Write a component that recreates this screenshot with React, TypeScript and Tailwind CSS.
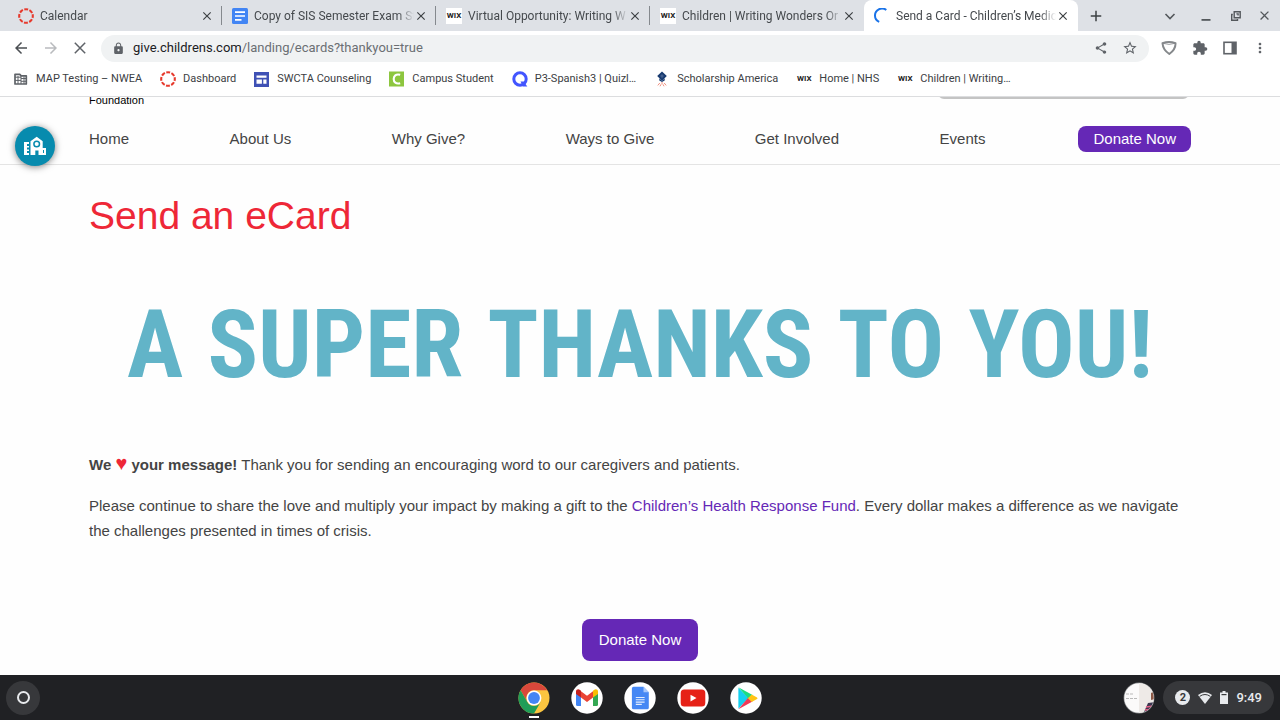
import type { ReactNode } from "react";
import {
  MdAdd,
  MdArrowBack,
  MdArrowForward,
  MdClose,
  MdExtension,
  MdLock,
  MdMoreVert,
  MdShare,
  MdStarBorder,
} from "react-icons/md";

const CanvasIcon = () => (
  <svg viewBox="0 0 16 16" className="size-4 shrink-0" fill="none">
    <circle cx="8" cy="8" r="6.8" stroke="#e6392c" strokeWidth="2.1" strokeDasharray="3.9 1.44" strokeDashoffset="1.95" />
  </svg>
);

const DocsIcon = () => (
  <svg viewBox="0 0 16 16" className="size-4 shrink-0">
    <rect width="16" height="16" rx="1.5" fill="#4285f4" />
    <path d="M3 4.2h10M3 8h10M3 11.8h6.5" stroke="#fff" strokeWidth="1.7" />
  </svg>
);

const WixIcon = () => (
  <span className="flex size-4 shrink-0 items-center justify-center bg-white text-[8px] leading-none font-bold text-[#222]">
    WIX
  </span>
);

const SpinnerIcon = () => (
  <svg viewBox="0 0 16 16" className="size-4 shrink-0" fill="none">
    <path d="M12.3 2A7 7 0 0 0 1 7.8c0 2.2 1.4 4.8 4.2 6" stroke="#1a73e8" strokeWidth="2" />
  </svg>
);

const FolderIcon = () => (
  <svg viewBox="0 0 16 16" className="size-4 shrink-0" fill="none">
    <path d="M2 13V3.3h4.8l1.4 1.5h5.1V13z" stroke="#5f6368" strokeWidth="1.7" strokeLinejoin="round" />
    <path d="M2 6.2h6M2 9.4h6M8 4.5V13M5 5v8M8 7.5h5M8 10.3h5M11 5.5V13" stroke="#5f6368" strokeWidth="1" />
  </svg>
);

const SitesIcon = () => (
  <svg viewBox="0 0 16 16" className="size-4 shrink-0">
    <rect y="1" width="15" height="15" fill="#3f51b5" />
    <path d="M2.5 4.5h10v2.3h-10zM2.5 8.4h5.4v4.4H2.5zM9.3 8.4h3.2v4.4H9.3z" fill="#fff" />
  </svg>
);

const CampusIcon = () => (
  <svg viewBox="0 0 16 16" className="size-4 shrink-0" fill="none">
    <rect width="15" height="15" y="0.5" fill="#8dc63f" />
    <path d="M11.2 3.8C6.8 2.6 4.7 5 4.7 8s2.2 5.4 6.5 4.2" stroke="#fff" strokeWidth="2.1" />
  </svg>
);

const QuizletIcon = () => (
  <svg viewBox="0 0 16 16" className="size-4 shrink-0" fill="none">
    <circle cx="8" cy="8" r="6.2" stroke="#4255ff" strokeWidth="3" />
    <path d="M8.5 10.4h3.2l3.6 5.2h-4.2z" fill="#4255ff" />
  </svg>
);

const ScholarshipIcon = () => (
  <svg viewBox="0 0 16 16" className="size-4 shrink-0">
    <path d="M8 .5 12.8 5 8 9.8 3.2 5z" fill="#173a70" />
    <path d="M5.3 7.2v2.3L8 11l2.7-1.5V7.2L8 9.7z" fill="#173a70" />
    <path d="M8 11v2.2M5.8 12l-2 2.4M10.2 12l2 2.4M7 13.3l-1 2M9 13.3l1 2" stroke="#f0907f" strokeWidth="1" />
    <path d="M8 3.2v4M6.2 5h3.6" stroke="#7f93b5" strokeWidth=".5" />
  </svg>
);

const tabs: { title: string; icon: ReactNode; active?: boolean }[] = [
  { title: "Calendar", icon: <CanvasIcon /> },
  { title: "Copy of SIS Semester Exam St", icon: <DocsIcon /> },
  { title: "Virtual Opportunity: Writing W", icon: <WixIcon /> },
  { title: "Children | Writing Wonders Or", icon: <WixIcon /> },
  { title: "Send a Card - Children’s Medic", icon: <SpinnerIcon />, active: true },
];

const bookmarks = [
  { title: "MAP Testing – NWEA", icon: <FolderIcon /> },
  { title: "Dashboard", icon: <CanvasIcon /> },
  { title: "SWCTA Counseling", icon: <SitesIcon /> },
  { title: "Campus Student", icon: <CampusIcon /> },
  { title: "P3-Spanish3 | Quizl…", icon: <QuizletIcon /> },
  { title: "Scholarship America", icon: <ScholarshipIcon /> },
  { title: "Home | NHS", icon: <WixIcon /> },
  { title: "Children | Writing…", icon: <WixIcon /> },
];

const navLinks = ["Home", "About Us", "Why Give?", "Ways to Give", "Get Involved", "Events"];

const TabStrip = () => (
  <div className="flex h-[31px] items-stretch bg-[#dee1e6] pl-2 text-xs text-[#45494d]">
    {tabs.map((tab, i) => (
      <div
        key={tab.title}
        className={`relative flex w-[214px] min-w-0 items-center pr-2 pl-[10px] ${tab.active ? "rounded-t-lg bg-white" : ""}`}
      >
        {tab.icon}
        <span className="ml-[6px] min-w-0 flex-1 overflow-hidden mask-r-from-90% whitespace-nowrap">{tab.title}</span>
        <button aria-label={`Close ${tab.title}`} className="shrink-0 text-[#3c4043]">
          <MdClose size={14} />
        </button>
        {i < 3 && <span className="absolute top-[6px] right-0 h-[19px] w-px bg-[#85898e]" />}
      </div>
    ))}
    <button aria-label="New tab" className="ml-1 flex w-7 items-center justify-center text-[#3c4043]">
      <MdAdd size={18} />
    </button>
    <div className="ml-auto flex items-center text-[#54585c]">
      <button aria-label="Search tabs" className="flex w-9 justify-center">
        <svg viewBox="0 0 12 12" className="size-3" fill="none">
          <path d="m1.5 4 4.5 4.5L10.5 4" stroke="currentColor" strokeWidth="1.6" />
        </svg>
      </button>
      <button aria-label="Minimize" className="flex w-9 justify-center">
        <svg viewBox="0 0 12 12" className="size-3">
          <path d="M1.5 9h9v1.8h-9z" fill="currentColor" />
        </svg>
      </button>
      <button aria-label="Restore" className="flex w-6 justify-center">
        <svg viewBox="0 0 12 12" className="size-3" fill="none" stroke="currentColor" strokeWidth="1.4">
          <path d="M4.2 1.7h6v6h-6zM2.8 4.5H1.7v5.8h5.8V9M6.4 3.9h1.7v1.6" />
        </svg>
      </button>
      <button aria-label="Close window" className="flex w-8 justify-center">
        <MdClose size={15} />
      </button>
    </div>
  </div>
);

const Toolbar = () => (
  <div className="flex h-[34px] items-center bg-white px-3 text-[#5f6368]">
    <button aria-label="Back" className="mr-3 text-[#4b4f53]">
      <MdArrowBack size={18} />
    </button>
    <button aria-label="Forward" className="mr-3 text-[#b9bbbe]">
      <MdArrowForward size={18} />
    </button>
    <button aria-label="Stop loading" className="mr-[13px]">
      <svg viewBox="0 0 16 16" className="size-4" fill="none">
        <path d="m2.8 2.8 10.4 10.4m0-10.4L2.8 13.2" stroke="currentColor" strokeWidth="1.5" />
      </svg>
    </button>
    <div className="flex h-[27px] flex-1 items-center rounded-full bg-[#f0f2f3] px-[11px]">
      <MdLock size={13} />
      <span className="ml-2 flex-1 text-[13px] text-[#6b6f73]">
        <span className="text-[#202124]">give.childrens.com</span>/landing/ecards?thankyou=true
      </span>
      <button aria-label="Share">
        <MdShare size={14} />
      </button>
      <button aria-label="Bookmark this page" className="ml-[14px]">
        <MdStarBorder size={16} />
      </button>
    </div>
    <div className="ml-3 flex items-center gap-[15px]">
      <button aria-label="Shield extension">
        <svg viewBox="0 0 16 16" className="size-4" fill="none">
          <path d="M1.5 3.3Q8 .7 14.5 3.3 14.8 9.5 8.3 14 2 10 1.5 3.3z" stroke="#85888b" strokeWidth="2" strokeLinejoin="round" />
          <path d="M3 3.5Q8 5.3 13 3.5" stroke="#85888b" strokeWidth=".8" />
        </svg>
      </button>
      <button aria-label="Extensions">
        <MdExtension size={16} />
      </button>
      <button aria-label="Side panel">
        <svg viewBox="0 0 14 14" className="size-[14px]">
          <rect x="1" y="1.3" width="12" height="11.4" fill="none" stroke="currentColor" strokeWidth="1.6" />
          <path d="M8.5 1.5H13v11H8.5z" fill="currentColor" />
        </svg>
      </button>
      <button aria-label="Menu">
        <MdMoreVert size={16} />
      </button>
    </div>
  </div>
);

const BookmarksBar = () => (
  <div className="flex h-8 items-center gap-[18px] border-b border-[#dcdddf] bg-white px-[13px] pb-[3px] text-[11px] leading-4 text-[#3c4043]">
    {bookmarks.map((bookmark) => (
      <a key={bookmark.title} href="#" className="flex items-center gap-[7px] whitespace-nowrap">
        {bookmark.icon}
        {bookmark.title}
      </a>
    ))}
  </div>
);

const SiteHeader = () => (
  <header className="border-b border-[#e4e4e4] px-[89px]">
    <div className="flex h-[10px] items-end justify-between overflow-hidden">
      <span className="text-[11px] leading-[14px] text-black">Foundation</span>
      <input
        aria-label="Search"
        className="mr-[2px] mb-2 h-8 w-[251px] shrink-0 rounded-md border-2 border-[#c4c4c4] bg-white"
      />
    </div>
    <nav className="flex h-[57px] items-center pt-[6px] leading-6">
      <ul className="mr-[93px] flex flex-1 justify-between">
        {navLinks.map((link) => (
          <li key={link}>
            <a href="#">{link}</a>
          </li>
        ))}
      </ul>
      <a href="#" className="rounded-lg bg-[#6528b6] px-[15px] py-px text-white">
        Donate Now
      </a>
    </nav>
  </header>
);

const Banner = () => (
  <p className="mt-[45px] flex h-[120px] items-center justify-between px-[38px] font-['Roboto_Condensed','Liberation_Sans_Narrow','Liberation_Sans',sans-serif] text-[94px] leading-none font-bold text-[#62b4c8]">
    {["A", "SUPER", "THANKS", "TO", "YOU!"].map((word) => (
      <span key={word}>{word}</span>
    ))}
  </p>
);

const Shelf = () => (
  <footer className="relative flex h-[45px] shrink-0 items-center justify-between bg-[#202124] px-[6px]">
    <button aria-label="Launcher" className="flex size-[34px] items-center justify-center rounded-full bg-[#37383b]">
      <span className="size-[13px] rounded-full border-2 border-[#e8eaed]" />
    </button>
    <div className="absolute left-1/2 flex -translate-x-1/2 gap-[21px]">
      <button aria-label="Chrome" className="relative">
        <svg viewBox="0 0 32 32" className="size-8">
          <circle cx="16" cy="16" r="15.5" fill="#fbc540" />
          <path d="M2.6 8.2A15.5 15.5 0 0 1 29.4 8.3H16A7.7 7.7 0 0 0 9.3 19.9z" fill="#d9483b" />
          <path d="M2.6 8.2A15.5 15.5 0 0 0 16 31.5l6.7-11.6A7.7 7.7 0 0 1 9.3 19.9z" fill="#1f9d58" />
          <circle cx="16" cy="16" r="7.4" fill="#fff" />
          <circle cx="16" cy="16" r="5.9" fill="#4385f4" />
        </svg>
        <span className="absolute top-[34px] left-[11px] h-[2px] w-[10px] bg-white" />
      </button>
      <button aria-label="Gmail">
        <svg viewBox="0 0 32 32" className="size-8">
          <circle cx="16" cy="16" r="15.7" fill="#fff" />
          <path d="M5 11v11.5q0 1.5 1.5 1.5H10V14.5z" fill="#4285f4" />
          <path d="M27 11v11.5q0 1.5-1.5 1.5H22V14.5z" fill="#34a853" />
          <path d="M10 9.2l6 4.6 6-4.6v6.2L16 20l-6-4.6z" fill="#ea4335" />
          <path d="M5 12V9.5C5 7 7.7 6.6 9 8l1 .8v6.7z" fill="#c5221f" />
          <path d="M27 12V9.5C27 7 24.3 6.6 23 8l-1 .8v6.7z" fill="#fbbc04" />
        </svg>
      </button>
      <button aria-label="Docs">
        <svg viewBox="0 0 32 32" className="size-8">
          <circle cx="16" cy="16" r="15.7" fill="#fff" />
          <path d="M9.5 4.8h10l5.3 5.4v15.5q0 1.6-1.6 1.6H9.5q-1.6 0-1.6-1.6V6.4q0-1.6 1.6-1.6z" fill="#4688f4" />
          <path d="M19.5 4.8v5.4h5.3z" fill="#a8c7fa" />
          <path d="M11.8 15.5h8.8M11.8 17.8h8.8M11.8 20.1h8.8M11.8 22.4h6" stroke="#e3edfd" strokeWidth="1.1" />
        </svg>
      </button>
      <button aria-label="YouTube">
        <svg viewBox="0 0 32 32" className="size-8">
          <circle cx="16" cy="16" r="15.7" fill="#fff" />
          <rect x="3.7" y="7.6" width="24.6" height="17" rx="3.5" fill="#e62117" />
          <path d="M13.5 12.7v6.8l6-3.4z" fill="#fff" />
        </svg>
      </button>
      <button aria-label="Play Store">
        <svg viewBox="0 0 32 32" className="size-8">
          <circle cx="16" cy="16" r="15.7" fill="#fff" />
          <path d="M8.4 5.8v21L18.5 16z" fill="#14d0f0" />
          <path d="M8.4 5.3 22.5 13l-4 3.8z" fill="#1bdc83" />
          <path d="M8.4 27.2 22.5 19.5l-4.2-4z" fill="#ee3a58" />
          <path d="m21.7 12.4 5.3 3q1.2.8 0 1.5l-5.3 3-3.8-3.7z" fill="#ffc415" />
        </svg>
      </button>
    </div>
    <div className="flex items-center gap-2">
      <button aria-label="Recent screenshot">
        <svg viewBox="0 0 32 32" className="size-8">
          <defs>
            <clipPath id="preview">
              <circle cx="16" cy="16" r="14.7" />
            </clipPath>
          </defs>
          <circle cx="16" cy="16" r="15.4" fill="#8a8c8e" />
          <g clipPath="url(#preview)">
            <path d="M0 0h32v32H0z" fill="#fbfafa" />
            <path d="M16 0h16v32H16z" fill="#eeeae7" />
            <path d="M3 12h8M3 16.5h11" stroke="#b9b9b9" strokeWidth="1" strokeDasharray="3 1" />
            <path d="m28 11 4-2v8l-4 1z" fill="#8d5a48" />
            <path d="m21 30 4-9 7-1v12H21z" fill="#3b3650" />
            <path d="m23 25 8-1M22 28l9-1" stroke="#e65f86" strokeWidth="1.6" />
          </g>
        </svg>
      </button>
      <button className="flex h-[33px] items-center gap-2 rounded-full bg-[#37383b] px-3 text-[#e8eaed]">
        <span className="flex size-[15px] items-center justify-center rounded-full bg-[#e8eaed] text-[11px] leading-none font-bold text-[#37383b]">
          2
        </span>
        <svg viewBox="0 0 14 12" className="h-3 w-[14px]">
          <path d="M0 3Q7-2.5 14 3L7 12z" fill="#e8eaed" />
          <path d="M1.6 4.4Q7 .6 12.4 4.4" fill="none" stroke="#37383b" strokeWidth="1" />
        </svg>
        <svg viewBox="0 0 8 13" className="h-[13px] w-2">
          <path d="M2.5 0h3v1.4H8V13H0V1.4h2.5z" fill="#e8eaed" />
          <path d="M1.5 3h5v1.2h-5z" fill="#37383b" />
        </svg>
        <span className="text-[13px] font-medium">9:49</span>
      </button>
    </div>
  </footer>
);

const App = () => {
  return (
    <div className="flex min-h-screen flex-col bg-white font-[Roboto,sans-serif]">
      <TabStrip />
      <Toolbar />
      <BookmarksBar />
      <div className="relative flex-1 bg-[#fefefe] font-['Liberation_Sans',sans-serif] text-[15px] text-[#444]">
        <SiteHeader />
        <button
          aria-label="School tools"
          className="absolute top-[29px] left-[15px] flex size-10 items-center justify-center rounded-full bg-[#078bae] shadow-[0_1px_7px_rgba(0,0,0,0.5)]"
        >
          <svg viewBox="0 0 24 20" className="h-5 w-6">
            <path
              d="M1 6h5v2H4v2h2v1.5H4v2h2v1.5H4V17h2v2H1zM7.5 19V5.2L13.7.8l6 4.4V12H23v7h-7.5v-4.5h-3.2V19z"
              fill="#fff"
            />
            <circle cx="13.7" cy="8" r="2.8" fill="none" stroke="#078bae" strokeWidth="1.5" />
            <path d="M20.5 14v3" stroke="#078bae" />
          </svg>
        </button>
        <main className="px-[89px] pt-[27px] pb-[14px]">
          <h1 className="text-[39px] leading-[48px] text-[#ee2737]">Send an eCard</h1>
          <Banner />
          <p className="mt-12 leading-6">
            <strong>
              We <span className="text-xl leading-none text-[#ee2737]">♥</span> your message!
            </strong>{" "}
            Thank you for sending an encouraging word to our caregivers and patients.
          </p>
          <p className="mt-4 leading-[25px]">
            Please continue to share the love and multiply your impact by making a gift to the{" "}
            <a href="#" className="text-[#6528b6]">
              Children’s Health Response Fund
            </a>
            . Every dollar makes a difference as we navigate the challenges presented in times of crisis.
          </p>
          <div className="mt-[76px] flex justify-center">
            <a href="#" className="rounded-lg bg-[#6528b6] px-[17px] py-[9px] leading-6 text-white">
              Donate Now
            </a>
          </div>
        </main>
      </div>
      <Shelf />
    </div>
  );
};

export default App;
